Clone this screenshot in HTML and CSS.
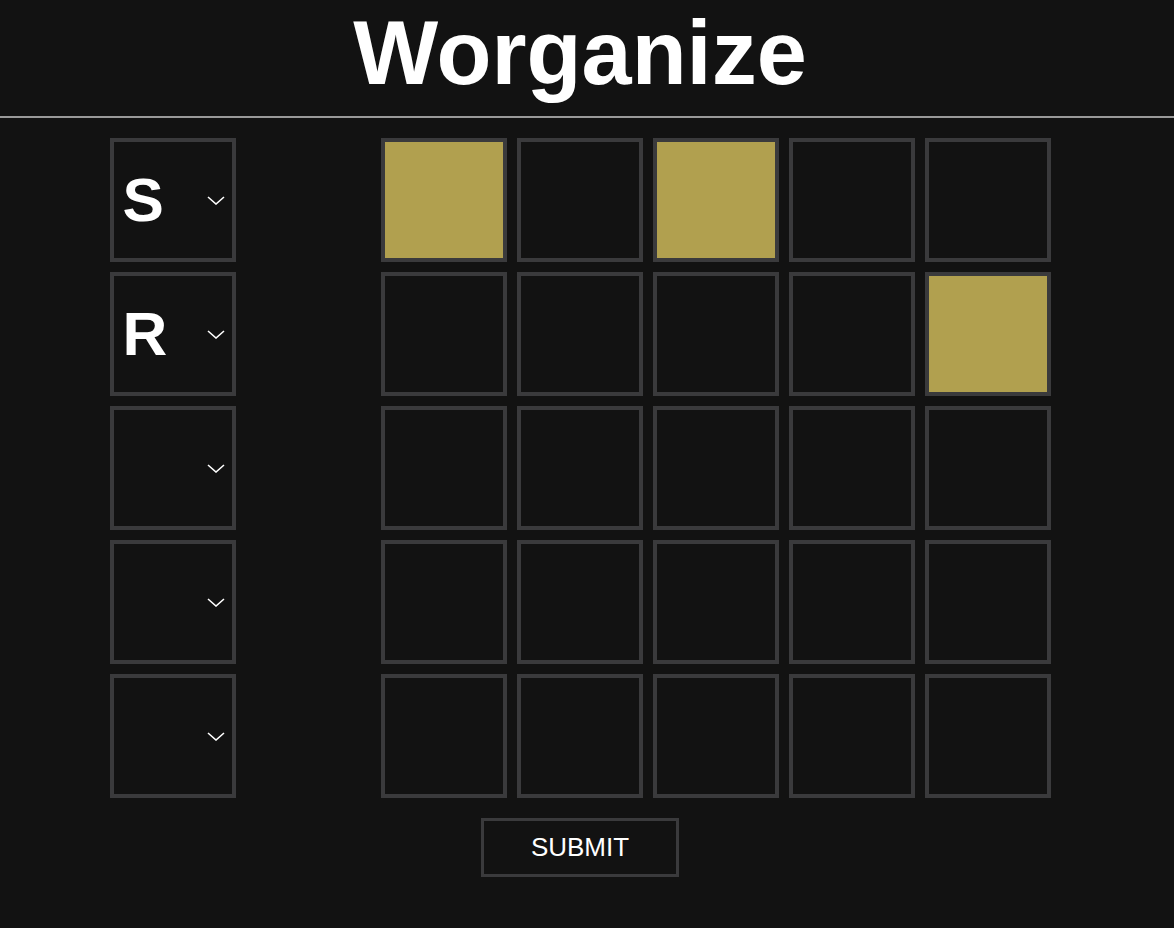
FILE: index.html
```html
<!DOCTYPE html>
<html lang="en">
<head>
  <meta charset="UTF-8" />
  <title>Worganize</title>
  <link rel="stylesheet" href="styles.css">
</head>
<body>
  <header class="header">
    <h1>Worganize</h1>
  </header>

  <main class="main">
    <div class="board">
      <!-- letter pickers -->
      <div class="pickers">
        <div class="picker"><span class="picker-letter">S</span><svg class="chevron" viewBox="0 0 18 9"><path d="M1 1 L9 8 L17 1" /></svg></div>
        <div class="picker"><span class="picker-letter">R</span><svg class="chevron" viewBox="0 0 18 9"><path d="M1 1 L9 8 L17 1" /></svg></div>
        <div class="picker"><span class="picker-letter"></span><svg class="chevron" viewBox="0 0 18 9"><path d="M1 1 L9 8 L17 1" /></svg></div>
        <div class="picker"><span class="picker-letter"></span><svg class="chevron" viewBox="0 0 18 9"><path d="M1 1 L9 8 L17 1" /></svg></div>
        <div class="picker"><span class="picker-letter"></span><svg class="chevron" viewBox="0 0 18 9"><path d="M1 1 L9 8 L17 1" /></svg></div>
      </div>

      <!-- tile grid -->
      <div class="grid">
        <div class="tile present"></div>
        <div class="tile"></div>
        <div class="tile present"></div>
        <div class="tile"></div>
        <div class="tile"></div>

        <div class="tile"></div>
        <div class="tile"></div>
        <div class="tile"></div>
        <div class="tile"></div>
        <div class="tile present"></div>

        <div class="tile"></div>
        <div class="tile"></div>
        <div class="tile"></div>
        <div class="tile"></div>
        <div class="tile"></div>

        <div class="tile"></div>
        <div class="tile"></div>
        <div class="tile"></div>
        <div class="tile"></div>
        <div class="tile"></div>

        <div class="tile"></div>
        <div class="tile"></div>
        <div class="tile"></div>
        <div class="tile"></div>
        <div class="tile"></div>
      </div>
    </div>

    <button class="submit-btn">SUBMIT</button>
  </main>
</body>
</html>
```

FILE: styles.css
```css
body {
  margin: 0;
  padding: 0;
  background-color: #121212;
  color: #ffffff;
  font-family: "Liberation Sans", Arial, sans-serif;
}

.header {
  padding-bottom: 10px;
  border-bottom: 2px solid #999999;
}

.header h1 {
  width: 1160px;
  margin: 0;
  font-size: 90px;
  line-height: 106px;
  font-weight: bold;
  text-align: center;
}

.main {
  width: 1160px;
  display: flex;
  flex-direction: column;
  align-items: center;
  gap: 20px;
  padding-top: 20px;
}

.board {
  display: flex;
  gap: 145px;
}

.pickers {
  display: flex;
  flex-direction: column;
  gap: 10px;
}

.picker {
  box-sizing: border-box;
  width: 126px;
  height: 124px;
  border: 4px solid #3a3a3c;
  display: flex;
  align-items: center;
  justify-content: space-between;
  padding: 0 7px 0 9px;
}

.picker-letter {
  font-size: 62px;
  font-weight: bold;
  line-height: 1;
}

.chevron {
  width: 18px;
  height: 9px;
  fill: none;
  stroke: #ffffff;
  stroke-width: 1.6;
}

.grid {
  display: grid;
  grid-template-columns: repeat(5, 126px);
  grid-auto-rows: 124px;
  gap: 10px;
}

.tile {
  box-sizing: border-box;
  border: 4px solid #3a3a3c;
}

.tile.present {
  background-color: #b1a04f;
}

.submit-btn {
  box-sizing: border-box;
  width: 198px;
  height: 59px;
  background-color: #121212;
  color: #ffffff;
  border: 3px solid #3a3a3c;
  font-family: "Liberation Sans", Arial, sans-serif;
  font-size: 26px;
  cursor: pointer;
}
```
